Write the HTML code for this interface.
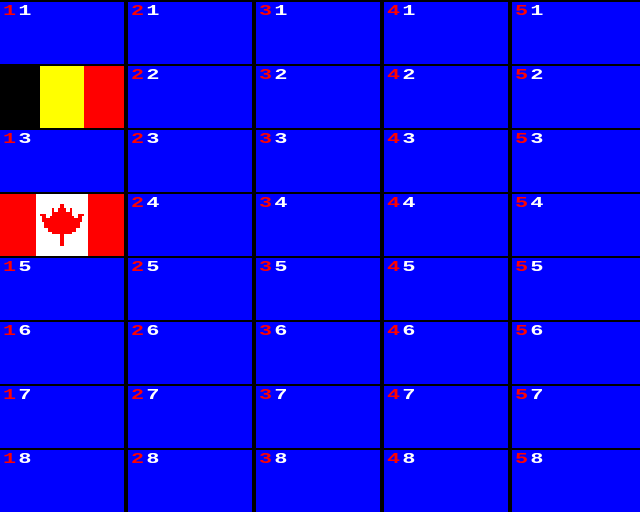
<!DOCTYPE html>
<html><head><style>
html,body{margin:0;padding:0;background:#000;width:640px;height:512px;overflow:hidden;position:relative}
.c{position:absolute;background:#0000ff;height:62px}
.t{position:absolute;left:3px;top:2px;font:bold 15px "Liberation Mono",monospace;letter-spacing:1.6px;color:#fff;line-height:15px;transform:scaleX(1.45);transform-origin:0 0}
.t b{color:#f00}
</style></head><body>
<script>
const xs=[[0,124],[128,124],[256,124],[384,124],[512,128]];
let h='';
for(let c=0;c<5;c++)for(let r=0;r<8;r++){
 const y=2+64*r;
 if(c==0&&(r==1||r==3))continue;
 h+=`<div class="c" style="left:${xs[c][0]}px;top:${y}px;width:${xs[c][1]}px"><div class="t"><b>${c+1}</b>${r+1}</div></div>`;
}
document.write(h);
</script>
<div style="position:absolute;left:0;top:66px;width:40px;height:62px;background:#000"></div>
<div style="position:absolute;left:40px;top:66px;width:44px;height:62px;background:#ff0"></div>
<div style="position:absolute;left:84px;top:66px;width:40px;height:62px;background:#f00"></div>
<svg style="position:absolute;left:0;top:194px" width="124" height="62">
<rect width="124" height="62" fill="#f00"/>
<rect x="36" width="52" height="62" fill="#fff"/>
<polygon fill="#f00" points="60,10 64,10 64,14 66,14 66,18 70,18 70,14 72,14 72,22 74,22 74,24 78,24 78,20 84,20 84,22 82,22 82,28 80,28 80,34 76,34 76,38 72,38 72,40 64,40 64,52 60,52 60,40 52,40 52,38 48,38 48,34 44,34 44,28 42,28 42,22 40,22 40,20 46,20 46,24 50,24 50,22 52,22 52,14 54,14 54,18 58,18 58,14 60,14"/>
</svg>
</body></html>
